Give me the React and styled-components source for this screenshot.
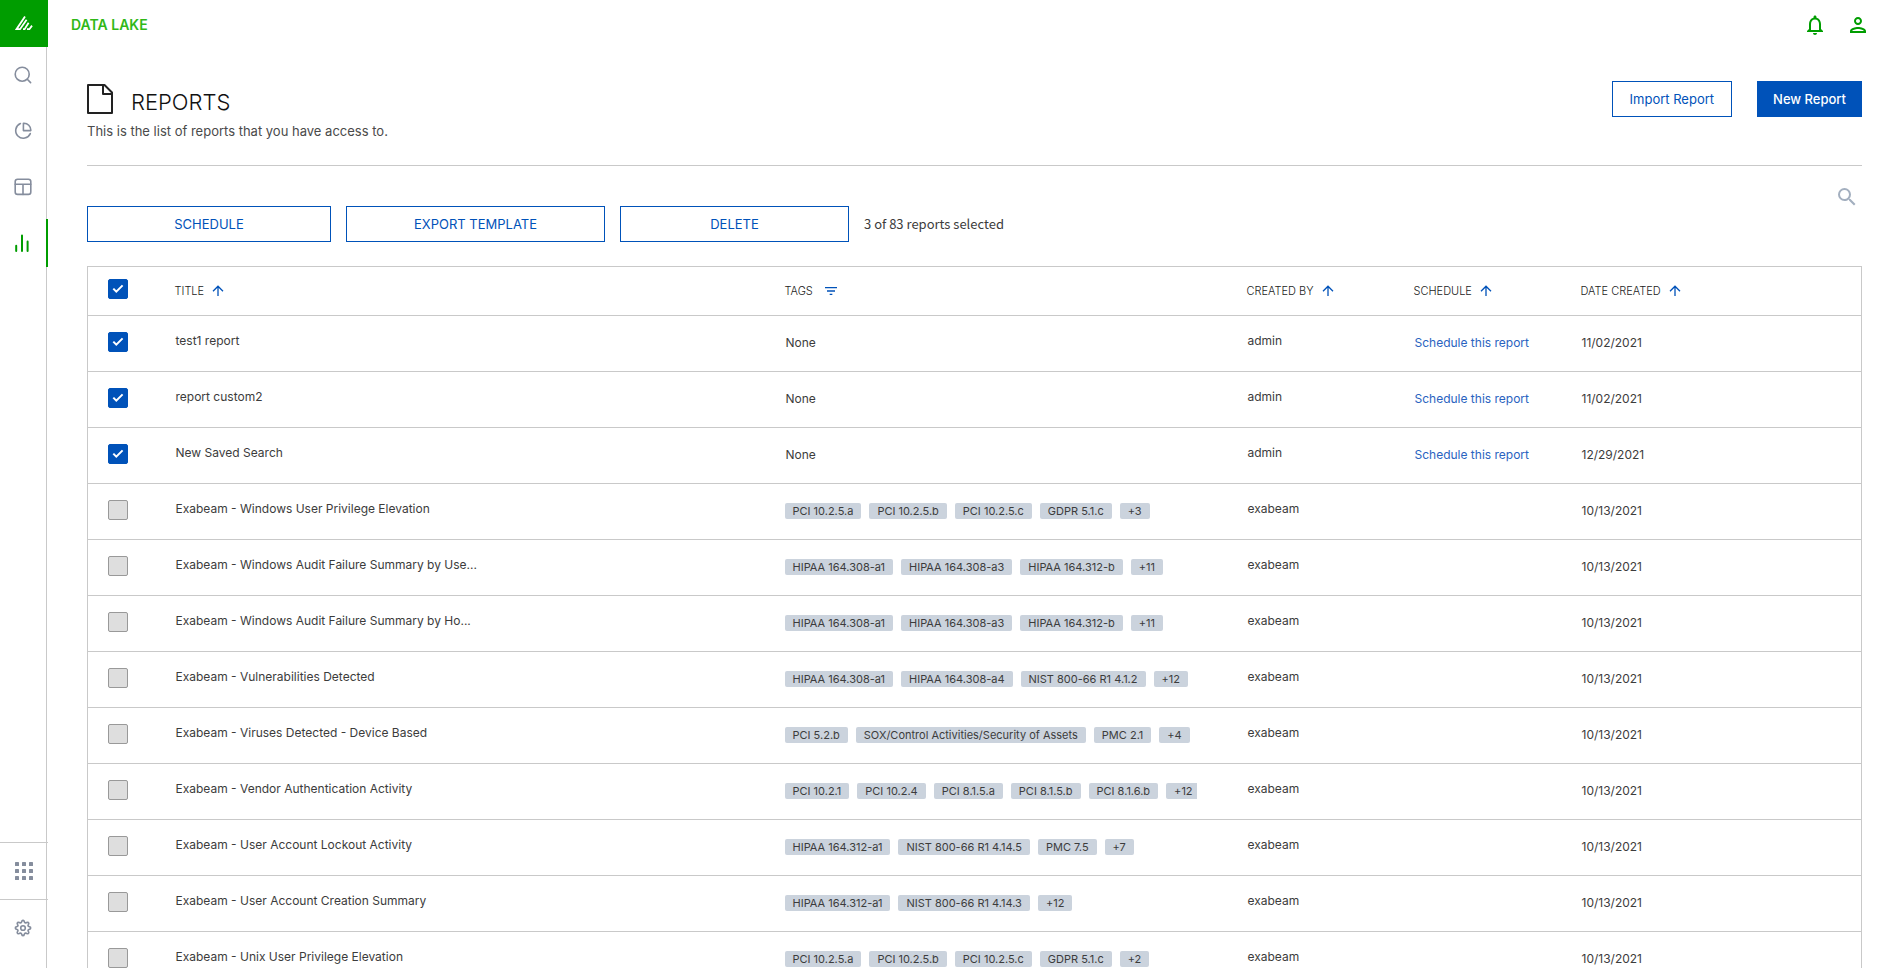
import React, { useState } from 'react';
import styled, { createGlobalStyle } from 'styled-components';
import { MdOutlineNotifications, MdOutlinePerson, MdSearch, MdFilterList } from 'react-icons/md';

const GlobalStyle = createGlobalStyle`
  * { box-sizing: border-box; }
  body {
    margin: 0;
    background: #fff;
    color: #3c3c3c;
    font-family: Inter, "Liberation Sans", sans-serif;
    font-size: 12px;
  }
  button { font-family: inherit; cursor: pointer; }
`;

const Layout = styled.div`
  display: flex;
  height: 100vh;
  overflow: hidden;
`;

const Sidebar = styled.aside`
  display: flex;
  flex-direction: column;
  flex: none;
  width: 47px;
  border-right: 1px solid #c9c9c9;
`;

const Logo = styled.a`
  display: flex;
  align-items: center;
  justify-content: center;
  width: 48px;
  height: 47px;
  background: #009d00;
`;

const Nav = styled.nav`
  display: flex;
  flex-direction: column;
  flex: 1;
  gap: 8px;
  padding-top: 4px;
`;

const NavButton = styled.button`
  display: flex;
  align-items: center;
  justify-content: center;
  width: 48px;
  height: 48px;
  padding: 0;
  border: 0;
  border-right: 2px solid ${props => (props.$active ? '#009d00' : 'transparent')};
  background: none;
  color: ${props => (props.$active ? '#009d00' : '#858d9d')};
`;

const BottomButton = styled(NavButton)`
  height: 57px;
  border-right: 0;
  border-top: 1px solid #c9c9c9;
  &:last-child {
    height: 69px;
    padding: 0 2px 12px 0;
  }
`;

const Page = styled.div`
  flex: 1;
  min-width: 0;
`;

const TopBar = styled.header`
  display: flex;
  align-items: center;
  justify-content: space-between;
  height: 49px;
  padding: 0 28px 0 24px;
`;

const Product = styled.span`
  color: #2fb817;
  font-size: 14px;
  font-weight: 600;
`;

const TopActions = styled.div`
  display: flex;
  gap: 19px;
`;

const IconButton = styled.button`
  display: flex;
  padding: 0;
  border: 0;
  background: none;
  color: ${props => props.$color || '#009d00'};
`;

const Main = styled.main`
  padding: 32px 36px 0 40px;
`;

const PageHeader = styled.div`
  display: flex;
  justify-content: space-between;
  height: 85px;
  border-bottom: 1px solid #c9c9c9;
`;

const Heading = styled.div`
  display: flex;
  align-items: center;
  gap: 18px;
  height: 36px;
  h1 {
    margin: 6px 0 0;
    color: #111;
    font-size: 22px;
    font-weight: 300;
    line-height: 28px;
  }
`;

const Intro = styled.p`
  margin: 5px 0 0;
  color: #4a4a4a;
  font-size: 13px;
  line-height: 18px;
`;

const HeaderButtons = styled.div`
  display: flex;
  gap: 25px;
`;

const Button = styled.button`
  height: 36px;
  padding: 0 ${props => (props.$primary ? 15 : 17)}px;
  border: 1px solid #0052b9;
  background: ${props => (props.$primary ? '#0052b9' : '#fff')};
  color: ${props => (props.$primary ? '#fff' : '#0052b9')};
  font-size: 13px;
  font-weight: ${props => (props.$primary ? 500 : 400)};
`;

const SearchLine = styled.div`
  display: flex;
  justify-content: flex-end;
  height: 40px;
  padding: 19px 3px 0 0;
`;

const BulkActions = styled.div`
  display: flex;
  align-items: center;
  gap: 15px;
  margin-bottom: 24px;
`;

const BulkButton = styled(Button)`
  width: ${props => props.$width}px;
`;

const Selected = styled.span`
  font-family: "Noto Sans CJK SC", "Liberation Sans", sans-serif;
  font-size: 13px;
  line-height: 18px;
`;

const Table = styled.table`
  width: 100%;
  table-layout: fixed;
  border-collapse: collapse;
  border: 1px solid #c9c9c9;
`;

const Col = styled.col`
  width: ${props => props.$width}px;
`;

const HeadCell = styled.th`
  height: 49px;
  padding: 0;
  color: #222;
  font-weight: 300;
  text-align: left;
`;

const SortButton = styled.button`
  display: flex;
  align-items: center;
  gap: ${props => props.$gap || 8}px;
  padding: 0;
  border: 0;
  background: none;
  color: inherit;
  font-size: 11px;
  font-weight: inherit;
  svg { color: #0052b9; }
`;

const Row = styled.tr`
  border-top: 1px solid #c9c9c9;
`;

const Cell = styled.td`
  height: 56px;
  padding: 0 0 ${props => (props.$raised ? 6 : 2)}px 1px;
  white-space: nowrap;
`;

const TagCell = styled(Cell)`
  padding: 0 50px 2px 0;
`;

const TagList = styled.div`
  display: flex;
  gap: 8px;
  padding-left: ${props => (props.$empty ? 1 : 0)}px;
  overflow: hidden;
`;

const Tag = styled.span`
  flex: none;
  height: 16px;
  padding: 0 8px;
  border-radius: 2px;
  background: #cbd3dd;
  font-size: 11px;
  line-height: 16px;
`;

const CheckCell = styled.td`
  padding: 0 0 4px 20px;
`;

const CheckLabel = styled.label`
  position: relative;
  display: block;
  width: 20px;
  height: 20px;
  input {
    appearance: none;
    display: block;
    width: 20px;
    height: 20px;
    margin: 0;
    border: 1px solid #999;
    border-radius: 2px;
    background: #dedede;
  }
  input:checked {
    border-color: #0052b9;
    background: #0052b9;
  }
  svg {
    position: absolute;
    top: 3px;
    left: 4px;
    pointer-events: none;
  }
`;

const ScheduleLink = styled.a`
  color: #2a63c0;
  text-decoration: none;
`;

const reports = [
  { title: 'test1 report', tags: [], by: 'admin', date: '11/02/2021' },
  { title: 'report custom2', tags: [], by: 'admin', date: '11/02/2021' },
  { title: 'New Saved Search', tags: [], by: 'admin', date: '12/29/2021' },
  { title: 'Exabeam - Windows User Privilege Elevation', tags: ['PCI 10.2.5.a', 'PCI 10.2.5.b', 'PCI 10.2.5.c', 'GDPR 5.1.c', '+3'] },
  { title: 'Exabeam - Windows Audit Failure Summary by Use...', tags: ['HIPAA 164.308-a1', 'HIPAA 164.308-a3', 'HIPAA 164.312-b', '+11'] },
  { title: 'Exabeam - Windows Audit Failure Summary by Ho...', tags: ['HIPAA 164.308-a1', 'HIPAA 164.308-a3', 'HIPAA 164.312-b', '+11'] },
  { title: 'Exabeam - Vulnerabilities Detected', tags: ['HIPAA 164.308-a1', 'HIPAA 164.308-a4', 'NIST 800-66 R1 4.1.2', '+12'] },
  { title: 'Exabeam - Viruses Detected - Device Based', tags: ['PCI 5.2.b', 'SOX/Control Activities/Security of Assets', 'PMC 2.1', '+4'] },
  { title: 'Exabeam - Vendor Authentication Activity', tags: ['PCI 10.2.1', 'PCI 10.2.4', 'PCI 8.1.5.a', 'PCI 8.1.5.b', 'PCI 8.1.6.b', '+12'] },
  { title: 'Exabeam - User Account Lockout Activity', tags: ['HIPAA 164.312-a1', 'NIST 800-66 R1 4.14.5', 'PMC 7.5', '+7'] },
  { title: 'Exabeam - User Account Creation Summary', tags: ['HIPAA 164.312-a1', 'NIST 800-66 R1 4.14.3', '+12'] },
  { title: 'Exabeam - Unix User Privilege Elevation', tags: ['PCI 10.2.5.a', 'PCI 10.2.5.b', 'PCI 10.2.5.c', 'GDPR 5.1.c', '+2'] },
];

function LineIcon({ children, stroke = 1.6 }) {
  return (
    <svg width="18" height="18" viewBox="0 0 18 18" fill="none" stroke="currentColor"
      strokeWidth={stroke} strokeLinecap="round" strokeLinejoin="round" aria-hidden="true">
      {children}
    </svg>
  );
}

const SearchIcon = () => (
  <LineIcon><circle cx="8.2" cy="8.2" r="7" /><path d="M13.3 13.3L16.6 16.6" /></LineIcon>
);

const PieIcon = () => (
  <LineIcon>
    <path d="M6.4 1.6A7.6 7.6 0 1 0 16.3 11.6" />
    <path d="M9.4 1.2V8.6H16.8V8A6.8 6.8 0 0 0 10 1.2Z" />
  </LineIcon>
);

const DashboardIcon = () => (
  <LineIcon><rect x="1.2" y="1.2" width="15.6" height="15.2" rx="2.4" /><path d="M1.2 6.3H16.8M9 6.3V16.4" /></LineIcon>
);

const ReportsIcon = () => (
  <LineIcon stroke={2}><path d="M2.2 11.8V17M8 1.6V17M13.6 7.6V17" /></LineIcon>
);

const AppsIcon = () => (
  <svg width="18" height="18" viewBox="0 0 18 18" fill="currentColor" aria-hidden="true">
    {[0, 7, 14].map(y => [0, 7, 14].map(x => (
      <rect key={`${x}-${y}`} x={x} y={y} width="4" height="4" rx="0.6" />
    )))}
  </svg>
);

// eight rounded teeth around the hub
const gearPath = Array.from({ length: 64 }, (_, i) => {
  const angle = (i / 64) * Math.PI * 2;
  const r = 6.6 + 1.05 * Math.tanh(2 * Math.cos(8 * angle));
  return `${i ? 'L' : 'M'}${(9 + r * Math.sin(angle)).toFixed(2)} ${(9 - r * Math.cos(angle)).toFixed(2)}`;
}).join('') + 'Z';

const GearIcon = () => (
  <LineIcon><path d={gearPath} /><circle cx="9" cy="9" r="2.3" /></LineIcon>
);

const LogoIcon = () => (
  <svg width="18" height="15" viewBox="0 0 18 15" fill="none" stroke="#fff" strokeWidth="1.8" aria-hidden="true">
    <path d="M10 .6L1.5 13.2H5L11.6 3.8" />
    <path d="M8 13.2H9.6L13.6 6.8" />
    <path d="M12 13.2H14.4L17 9.6" />
  </svg>
);

const FileIcon = () => (
  <svg width="26" height="30" viewBox="0 0 26 30" fill="none" stroke="#222" strokeWidth="2" strokeLinejoin="round" aria-hidden="true">
    <path d="M1 1H17.5L25 8.5V29H1Z" />
    <path d="M16 1V10H25" />
  </svg>
);

const ArrowUp = () => (
  <svg width="12" height="12" viewBox="0 0 12 12" fill="none" stroke="currentColor" strokeWidth="1.3" aria-hidden="true">
    <path d="M6 11V1.5M1 6.2L6 1.2L11 6.2" />
  </svg>
);

function Checkbox({ label, checked, onChange }) {
  return (
    <CheckLabel>
      <input type="checkbox" aria-label={label} checked={checked} onChange={onChange} />
      {checked && (
        <svg width="12" height="12" viewBox="0 0 12 12" fill="none" stroke="#fff" strokeWidth="2" aria-hidden="true">
          <path d="M1.3 6.6L4.3 9.6L10.6 3.4" />
        </svg>
      )}
    </CheckLabel>
  );
}

function SortHeader({ children }) {
  return (
    <HeadCell>
      <SortButton>{children}<ArrowUp /></SortButton>
    </HeadCell>
  );
}

function App() {
  const [selected, setSelected] = useState([0, 1, 2]);

  const toggle = (index) => {
    setSelected(selected.includes(index) ? selected.filter(i => i !== index) : [...selected, index]);
  };

  const toggleAll = () => {
    setSelected(selected.length ? [] : reports.map((_, i) => i));
  };

  return (
    <Layout>
      <GlobalStyle />
      <Sidebar>
        <Logo href="#" aria-label="Home"><LogoIcon /></Logo>
        <Nav>
          <NavButton aria-label="Search"><SearchIcon /></NavButton>
          <NavButton aria-label="Visualize"><PieIcon /></NavButton>
          <NavButton aria-label="Dashboards"><DashboardIcon /></NavButton>
          <NavButton aria-label="Reports" $active><ReportsIcon /></NavButton>
        </Nav>
        <BottomButton aria-label="Apps"><AppsIcon /></BottomButton>
        <BottomButton aria-label="Settings"><GearIcon /></BottomButton>
      </Sidebar>
      <Page>
        <TopBar>
          <Product>DATA LAKE</Product>
          <TopActions>
            <IconButton aria-label="Notifications"><MdOutlineNotifications size={24} /></IconButton>
            <IconButton aria-label="Account"><MdOutlinePerson size={24} /></IconButton>
          </TopActions>
        </TopBar>
        <Main>
          <PageHeader>
            <div>
              <Heading>
                <FileIcon />
                <h1>REPORTS</h1>
              </Heading>
              <Intro>This is the list of reports that you have access to.</Intro>
            </div>
            <HeaderButtons>
              <Button>Import Report</Button>
              <Button $primary>New Report</Button>
            </HeaderButtons>
          </PageHeader>
          <SearchLine>
            <IconButton aria-label="Search reports" $color="#a3afbf"><MdSearch size={24} /></IconButton>
          </SearchLine>
          <BulkActions>
            <BulkButton $width={244}>SCHEDULE</BulkButton>
            <BulkButton $width={259}>EXPORT TEMPLATE</BulkButton>
            <BulkButton $width={229}>DELETE</BulkButton>
            <Selected>{selected.length} of 83 reports selected</Selected>
          </BulkActions>
          <Table>
            <colgroup>
              <Col $width={87} />
              <col />
              <Col $width={462} />
              <Col $width={167} />
              <Col $width={167} />
              <Col $width={281} />
            </colgroup>
            <thead>
              <tr>
                <CheckCell as="th">
                  <Checkbox label="Select all reports" checked={selected.length > 0} onChange={toggleAll} />
                </CheckCell>
                <SortHeader>TITLE</SortHeader>
                <HeadCell>
                  <SortButton $gap={10}>TAGS<MdFilterList size={16} /></SortButton>
                </HeadCell>
                <SortHeader>CREATED BY</SortHeader>
                <SortHeader>SCHEDULE</SortHeader>
                <SortHeader>DATE CREATED</SortHeader>
              </tr>
            </thead>
            <tbody>
              {reports.map((report, i) => (
                <Row key={i}>
                  <CheckCell>
                    <Checkbox label={report.title} checked={selected.includes(i)} onChange={() => toggle(i)} />
                  </CheckCell>
                  <Cell $raised>{report.title}</Cell>
                  <TagCell>
                    <TagList $empty={!report.tags.length}>
                      {report.tags.length ? report.tags.map(tag => <Tag key={tag}>{tag}</Tag>) : 'None'}
                    </TagList>
                  </TagCell>
                  <Cell $raised>{report.by || 'exabeam'}</Cell>
                  <Cell>{report.by && <ScheduleLink href="#">Schedule this report</ScheduleLink>}</Cell>
                  <Cell>{report.date || '10/13/2021'}</Cell>
                </Row>
              ))}
            </tbody>
          </Table>
        </Main>
      </Page>
    </Layout>
  );
}

export default App;
